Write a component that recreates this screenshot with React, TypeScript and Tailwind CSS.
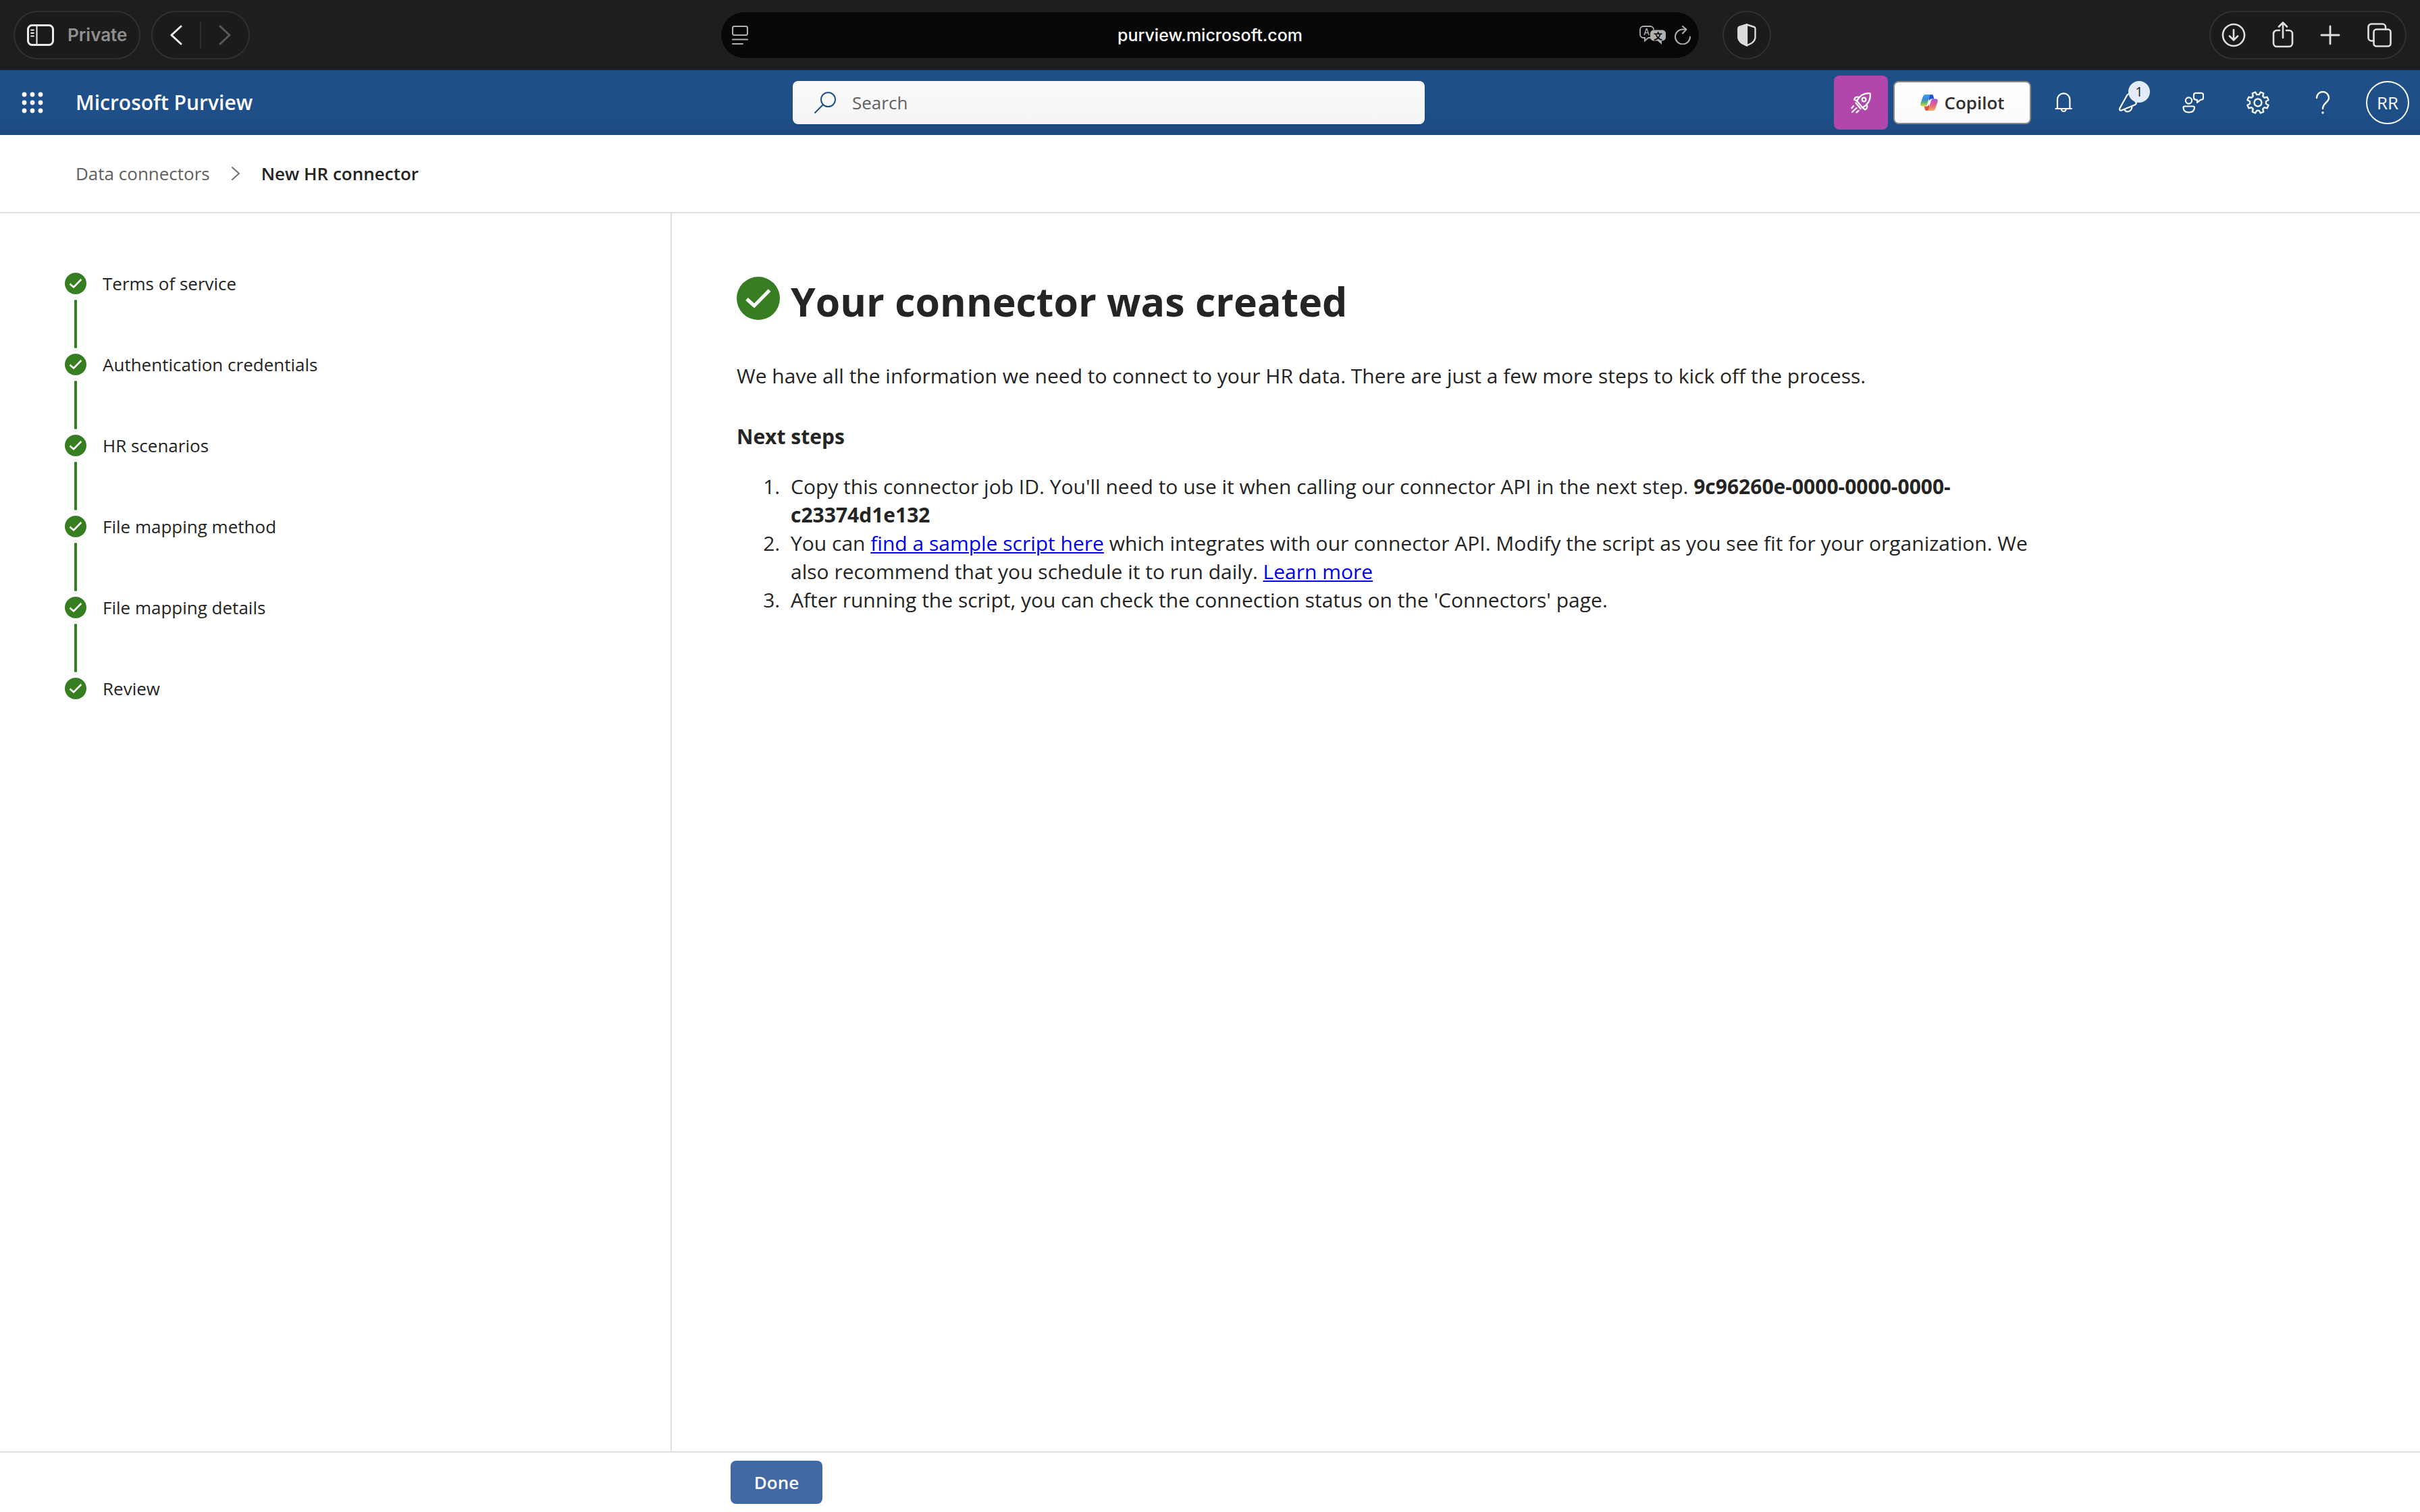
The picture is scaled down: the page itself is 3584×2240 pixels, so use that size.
import type { ReactNode } from 'react'

const steps = [
  'Terms of service',
  'Authentication credentials',
  'HR scenarios',
  'File mapping method',
  'File mapping details',
  'Review',
]

function gearPath() {
  const points: string[] = []
  const profile: [number, number][] = [
    [-14, 12],
    [-9, 16],
    [9, 16],
    [14, 12],
  ]
  for (let i = 0; i < 8; i++) {
    for (const [angle, radius] of profile) {
      const a = ((22.5 + i * 45 + angle) * Math.PI) / 180
      points.push(`${(18 + radius * Math.cos(a)).toFixed(2)} ${(18 + radius * Math.sin(a)).toFixed(2)}`)
    }
  }
  return `M${points.join('L')}Z`
}

interface IconProps {
  className: string
  viewBox: string
  stroke?: number
  children: ReactNode
}

function Icon({ className, viewBox, stroke = 2, children }: IconProps) {
  return (
    <svg
      className={className}
      viewBox={viewBox}
      fill="none"
      stroke="currentColor"
      strokeWidth={stroke}
      strokeLinecap="round"
      strokeLinejoin="round"
      aria-hidden="true"
    >
      {children}
    </svg>
  )
}

function CheckCircle({ className }: { className: string }) {
  return (
    <svg className={className} viewBox="0 0 32 32" aria-hidden="true">
      <circle cx="16" cy="16" r="16" fill="#377d22" />
      <path d="M7.5 16.5 13 21.5 24.3 10" fill="none" stroke="#fff" strokeWidth="2.6" />
    </svg>
  )
}

function CopilotLogo() {
  return (
    <svg className="h-6 w-7 shrink-0" viewBox="0 0 28 26" aria-hidden="true">
      <defs>
        <linearGradient id="cp-left" x1="0" y1="0" x2="0" y2="1">
          <stop offset="0" stopColor="#3fa3ee" />
          <stop offset=".4" stopColor="#3c86d8" />
          <stop offset=".7" stopColor="#5cb872" />
          <stop offset="1" stopColor="#f0d53c" />
        </linearGradient>
        <linearGradient id="cp-right" x1="0" y1="0" x2="0" y2="1">
          <stop offset="0" stopColor="#a257e6" />
          <stop offset=".5" stopColor="#e5627f" />
          <stop offset="1" stopColor="#f6a75b" />
        </linearGradient>
      </defs>
      <path d="M12 0h6c1.500 0 2.400 1 2.800 2.400L22 7h-4c-2 0-3 1-3.600 3z" fill="#2350c9" />
      <path d="M16 26h-6c-1.500 0-2.400-1-2.800-2.400L6 19h4c2 0 3-1 3.600-3z" fill="#e0503e" />
      <path d="M18 0H8.500C5.800 0 4.700 1.500 3.900 4L.6 13.500C-.5 17 .5 19 3.500 19h3.500c2.200 0 3.200-1 3.900-3.200L14.600 3.500C15.200 1.400 16 0 18 0Z" fill="url(#cp-left)" />
      <path d="M10 26h9.500c2.700 0 3.800-1.500 4.600-4l3.300-9.500C28.500 9 27.500 7 24.500 7H21c-2.200 0-3.200 1-3.900 3.200l-3.700 12.300C12.800 24.600 12 26 10 26Z" fill="url(#cp-right)" />
    </svg>
  )
}

function BrowserBar() {
  return (
    <div className="grid h-[104px] grid-cols-[1fr_1450px_1fr] items-center bg-[#1e1e1e] font-[Inter,sans-serif] text-[26px] leading-8 shadow-[inset_0_-2px_0_#232323]">
      <div className="flex items-center gap-4 pl-5">
        <button className="flex h-[72px] w-[188px] items-center gap-5 rounded-full border-2 border-[#303030] bg-[#1b1b1b] pl-[18px] font-semibold text-[#8f8f8f]">
          <Icon className="h-8 w-10 shrink-0 text-[#ececec]" viewBox="0 0 40 32" stroke={3}>
            <rect x="1.500" y="1.500" width="37" height="29" rx="6" />
            <path d="M14.500 2v28" strokeWidth="2" />
            <path d="M6 8.500h4M6 13h4M6 17.500h4" strokeWidth="1.800" />
          </Icon>
          Private
        </button>
        <div className="flex h-[72px] w-[146px] items-center rounded-full border-2 border-[#303030] bg-[#1b1b1b]">
          <button className="flex flex-1 justify-center" aria-label="Back">
            <Icon className="h-8 w-5 text-[#ececec]" viewBox="0 0 20 32" stroke={3}>
              <path d="M17 3 3 16l14 13" />
            </Icon>
          </button>
          <span className="h-10 w-0.5 bg-[#2e2e2e]" />
          <button className="flex flex-1 justify-center" aria-label="Forward">
            <Icon className="h-8 w-5 text-[#5a5a5a]" viewBox="0 0 20 32" stroke={3}>
              <path d="m3 3 14 13L3 29" />
            </Icon>
          </button>
        </div>
      </div>

      <div className="grid h-[70px] grid-cols-[1fr_auto_1fr] items-center rounded-full border border-[#232323] bg-[#070707] px-3 text-white">
        <button className="w-8 pl-1" aria-label="Page menu">
          <Icon className="h-7 w-6 text-[#b0b0b0]" viewBox="0 0 24 28">
            <rect x="1" y="1" width="22" height="13" rx="2.500" />
            <path d="M1 20.500h22M1 27h15" />
          </Icon>
        </button>
        <span className="text-[25px] font-medium">purview.microsoft.com</span>
        <div className="flex items-center justify-end gap-3">
          <button aria-label="Translate">
            <svg className="h-7 w-10 text-[#b0b0b0]" viewBox="0 0 40 28" aria-hidden="true">
              <path
                d="M17 18h-4l-5 4.500V18H6a5 5 0 0 1-5-5V6a5 5 0 0 1 5-5h10a5 5 0 0 1 5 5"
                fill="none"
                stroke="currentColor"
                strokeWidth="1.800"
              />
              <path d="M21 6.500h13a5 5 0 0 1 5 5v6a5 5 0 0 1-5 5h-1V28l-6-5.500h-6a5 5 0 0 1-5-5v-6a5 5 0 0 1 5-5Z" fill="currentColor" />
              <text x="10.500" y="14" textAnchor="middle" fill="currentColor" className="font-[Inter,sans-serif] text-[13px] font-medium">
                A
              </text>
              <text x="27.500" y="19.500" textAnchor="middle" fill="#070707" className="font-['Noto_Sans_CJK_SC',sans-serif] text-[13px] font-bold">
                文
              </text>
            </svg>
          </button>
          <button aria-label="Reload">
            <Icon className="h-7 w-6 text-[#b0b0b0]" viewBox="0 0 24 28">
              <path d="M23 16.500A11 11 0 1 1 12 5.500h5" />
              <path d="M12 1l5.500 4.500L12 11.500" />
            </Icon>
          </button>
        </div>
      </div>

      <div className="flex items-center justify-between pr-5 pl-[34px]">
        <button className="flex size-[72px] items-center justify-center rounded-full border-2 border-[#303030] bg-[#1b1b1b] text-[#dcdcdc]" aria-label="Privacy report">
          <Icon className="h-[34px] w-7" viewBox="0 0 28 34" stroke={2.4}>
            <path d="M14 1.500 25 5q1.500.5 1.500 2.500V20q0 5-5.500 9l-7 3.500L7 29q-5.500-4-5.500-9V7.500Q1.500 5.500 3 5Z" />
            <path d="M14 1.500 3 5q-1.500.5-1.500 2.500V20q0 5 5.500 9l7 3.500Z" fill="currentColor" />
          </Icon>
        </button>
        <div className="flex h-[72px] w-[292px] items-center justify-between rounded-full border-2 border-[#303030] bg-[#1b1b1b] pr-5 pl-4 text-[#e0e0e0]">
          <button aria-label="Downloads">
            <Icon className="size-9" viewBox="0 0 36 36" stroke={2.6}>
              <circle cx="18" cy="18" r="16" />
              <path d="M18 10v15M12 19.500l6 6 6-6" />
            </Icon>
          </button>
          <button aria-label="Share">
            <Icon className="h-10 w-8" viewBox="0 0 32 40" stroke={2.6}>
              <path d="M11 13H7a5 5 0 0 0-5 5v14a5 5 0 0 0 5 5h18a5 5 0 0 0 5-5V18a5 5 0 0 0-5-5h-4" />
              <path d="M16 24V2M10 7.500 16 1.500l6 6" />
            </Icon>
          </button>
          <button aria-label="New tab">
            <Icon className="size-8" viewBox="0 0 32 32" stroke={2.8}>
              <path d="M16 3v26M3 16h26" />
            </Icon>
          </button>
          <button aria-label="Tab overview">
            <Icon className="size-9" viewBox="0 0 36 36" stroke={2.6}>
              <rect x="9.500" y="9.500" width="25" height="25" rx="4" />
              <path d="M9.500 26.500H6a4.500 4.500 0 0 1-4.500-4.500V6A4.500 4.500 0 0 1 6 1.500h16.500A4.500 4.500 0 0 1 27 6v3.500" />
            </Icon>
          </button>
        </div>
      </div>
    </div>
  )
}

function HeaderButton({ label, children }: { label: string; children: ReactNode }) {
  return (
    <button className="relative flex h-24 w-24 items-center justify-center text-white" aria-label={label}>
      {children}
    </button>
  )
}

function AppHeader() {
  return (
    <header className="flex h-24 items-center bg-linear-to-b from-[#1e4f89] from-60% to-[#1d4a80] text-white">
      <div className="flex w-[1174px] items-center">
        <HeaderButton label="App launcher">
          <svg className="size-8" viewBox="0 0 32 32" fill="currentColor" aria-hidden="true">
            {[4, 16, 28].map((y) => [4, 16, 28].map((x) => <circle key={`${x}-${y}`} cx={x} cy={y} r="3.400" />))}
          </svg>
        </HeaderButton>
        <span className="pl-4 text-[30px] leading-10 font-semibold">Microsoft Purview</span>
      </div>
      <label className="flex h-16 w-[936px] items-center gap-6 rounded-lg bg-linear-to-b from-[#fafafa] to-[#f5f5f5] px-8 shadow-sm">
        <Icon className="size-8 shrink-0 text-[#1e4f89]" viewBox="0 0 32 32">
          <circle cx="20.500" cy="11.500" r="10.500" />
          <path d="M13 19 1 31" />
        </Icon>
        <input
          type="text"
          placeholder="Search"
          aria-label="Search"
          className="w-full bg-transparent text-[26px] leading-10 text-[#242424] outline-none placeholder:text-[#616161]"
        />
      </label>
      <div className="ml-auto flex items-center">
        <button className="mr-2 flex h-20 w-20 items-center justify-center rounded-lg bg-[#b146ab]" aria-label="What's new">
          <Icon className="size-8" viewBox="0 0 32 32" stroke={2.3}>
            <path d="M10 13.500C14 6 20 1.500 29.500 2.300 31 11 26.500 18.500 18.500 23.500Z" />
            <circle cx="20.500" cy="11.500" r="2.800" />
            <path d="M13.500 8.500C10.500 6.500 7 8 6 11.500l4 2M24.500 18.500c1.500 3.500.5 6.500-2.500 8l-3.500-3" />
            <path d="m8.500 16.500 7 8.500M5 21l-2.500 3M9.500 24l-6.500 6M12.500 28l-3 2.500" />
          </Icon>
        </button>
        <button className="flex h-16 w-[204px] items-center justify-center gap-2 rounded-lg border-2 border-[#8a8886] bg-linear-to-b from-white to-[#fbfbfb] text-[26px] leading-10 font-semibold text-[#323130]">
          <CopilotLogo />
          Copilot
        </button>
        <HeaderButton label="Notifications">
          <Icon className="size-8" viewBox="0 0 32 32" stroke={2.2}>
            <path d="M7 24.500V11.500a9.200 9.200 0 0 1 18.400 0v13M4.500 25h23.500" />
            <path d="M12.800 25.500a3.500 3.500 0 0 0 7 0" />
          </Icon>
        </HeaderButton>
        <HeaderButton label="Announcements, 1 new">
          <Icon className="size-8" viewBox="0 0 32 32" stroke={2.2}>
            <path d="M14.500 4.500 3.300 24.500q-1 3.300 2 3.200L26 19.200q2.500-1.500 1.500-3.700L19 4.500q-2.500-2.500-4.500 0Z" />
            <path d="M10.500 26.500c2.500 5 10.500 3.500 11-5" />
          </Icon>
          <span className="absolute top-4 right-4 flex size-8 items-center justify-center rounded-full bg-[#e3ecf9] text-[20px] leading-6 text-[#242424]">
            1
          </span>
        </HeaderButton>
        <HeaderButton label="Feedback">
          <Icon className="size-8" viewBox="0 0 32 32" stroke={2.2}>
            <circle cx="9.500" cy="13" r="4.600" />
            <path d="M3.500 21.500h12.500q2 0 2 2-.5 7-8.300 7T1.500 23.500q0-2 2-2Z" />
            <path d="M20 1.800h8q3 0 3 3v4q0 3-3 3h-1l-5 4v-4h-1.500q-3.500 0-3.500-3v-4q0-3 3-3Z" />
          </Icon>
        </HeaderButton>
        <HeaderButton label="Settings">
          <Icon className="size-9" viewBox="0 0 36 36" stroke={2.3}>
            <path d={gearPath()} />
            <circle cx="18" cy="18" r="5.500" />
          </Icon>
        </HeaderButton>
        <HeaderButton label="Help">
          <Icon className="h-9 w-6" viewBox="0 0 24 36" stroke={2.4}>
            <path d="M3 11a9 9 0 1 1 18 0c0 6.500-9 7.500-9 16" />
            <circle cx="12" cy="33" r="1" fill="currentColor" strokeWidth="1.500" />
          </Icon>
        </HeaderButton>
        <HeaderButton label="Account">
          <span className="flex size-16 items-center justify-center rounded-full border-2 border-white text-[26px] leading-8 font-medium">
            RR
          </span>
        </HeaderButton>
      </div>
    </header>
  )
}

function Breadcrumb() {
  return (
    <nav className="flex h-[116px] items-center border-b-2 border-[#e0e0e0] pl-28 text-[26px] leading-10" aria-label="Breadcrumb">
      <a href="#connectors" className="text-[#616161]">
        Data connectors
      </a>
      <Icon className="mx-8 h-5 w-3 text-[#707070]" viewBox="0 0 12 20">
        <path d="m1 1 10 9-10 9" />
      </Icon>
      <span className="font-semibold text-[#242424]" aria-current="page">
        New HR connector
      </span>
    </nav>
  )
}

function StepList() {
  return (
    <aside className="w-[995px] shrink-0 border-r-2 border-[#e0e0e0] pt-[88px] pl-24">
      <ol>
        {steps.map((step, i) => (
          <li key={step} className="flex gap-6">
            <div className="flex w-8 flex-col items-center gap-2 pb-2">
              <CheckCircle className="size-8" />
              {i < steps.length - 1 && <span className="h-[72px] w-1 rounded-full bg-[#377d22]" />}
            </div>
            <span className="text-[26px] leading-8">{step}</span>
          </li>
        ))}
      </ol>
    </aside>
  )
}

export default function App() {
  return (
    <div className="flex min-h-screen flex-col bg-white font-['Open_Sans',sans-serif] text-[#242424]">
      <BrowserBar />
      <AppHeader />
      <Breadcrumb />
      <div className="flex flex-1">
        <StepList />
        <main className="flex-1 pt-[90px] pl-24 text-[30px] leading-[42px]">
          <div className="max-w-[1960px]">
            <div className="flex items-start gap-4">
              <CheckCircle className="mt-1 size-16 shrink-0" />
              <h1 className="text-[59px] leading-[80px] font-bold">Your connector was created</h1>
            </div>
            <p className="mt-[50px]">
              We have all the information we need to connect to your HR data. There are just a few more steps to kick off
              the process.
            </p>
            <h2 className="mt-12 font-bold">Next steps</h2>
            <ol className="mt-8 list-decimal pl-[72px]">
              <li className="pl-2">
                Copy this connector job ID. You'll need to use it when calling our connector API in the next step.{' '}
                <strong>9c96260e-0000-0000-0000-c23374d1e132</strong>
              </li>
              <li className="pl-2">
                You can{' '}
                <a href="#script" className="text-[#0000ee] underline decoration-2 underline-offset-2">
                  find a sample script here
                </a>{' '}
                which integrates with our connector API. Modify the script as you see fit for your organization. We also
                recommend that you schedule it to run daily.{' '}
                <a href="#learn" className="text-[#0000ee] underline decoration-2 underline-offset-2">
                  Learn more
                </a>
              </li>
              <li className="pl-2">
                After running the script, you can check the connection status on the 'Connectors' page.
              </li>
            </ol>
          </div>
        </main>
      </div>
      <footer className="flex h-[90px] border-t-2 border-[#e0e0e0] pt-3 pl-[1082px]">
        <button className="h-16 w-[136px] rounded-lg bg-[#4069a6] text-[26px] leading-10 font-semibold text-white">
          Done
        </button>
      </footer>
    </div>
  )
}
